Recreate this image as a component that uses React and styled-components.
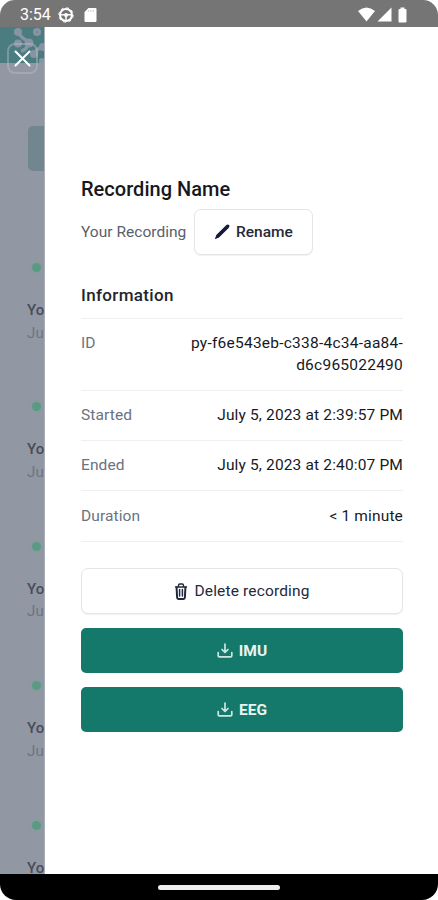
import styled, { createGlobalStyle } from 'styled-components';

const GlobalStyle = createGlobalStyle`
    * {
        box-sizing: border-box;
    }
    body {
        margin: 0;
        background-color: white;
        font-family: Roboto, "Liberation Sans", sans-serif;
    }
`;

const Screen = styled.div`
    width: 438px;
    height: 900px;
    display: flex;
    flex-direction: column;
    overflow: hidden;
`;

const StatusBar = styled.div`
    height: 27px;
    flex-shrink: 0;
    display: flex;
    align-items: center;
    justify-content: space-between;
    padding: 2px 28px 0px 20px;
    background-color: #757575;
    color: white;
    border-radius: 15px 15px 0px 0px;
`;

const StatusGroup = styled.div`
    display: flex;
    align-items: center;
    gap: ${props=>props.gap};
`;

const Clock = styled.span`
    width: 30px;
    font-size: 16px;
    font-weight: 400;
    white-space: nowrap;
`;

const Main = styled.div`
    flex: 1;
    min-height: 0;
    display: flex;
`;

const Backdrop = styled.div`
    width: 45px;
    position: relative;
    overflow: hidden;
    background-color: #9297a4;
    border-right: 1px solid #a9adb8;
`;

const Header = styled.div`
    height: 36px;
    background-color: #4b7c7f;
`;

const Logo = styled.svg`
    display: block;
`;

const CloseButton = styled.button`
    position: absolute;
    top: 16px;
    left: 7px;
    width: 31px;
    height: 31px;
    padding: 0;
    display: flex;
    align-items: center;
    justify-content: center;
    border: 2px solid rgba(190, 194, 208, 0.42);
    border-radius: 8px;
    background: transparent;
    cursor: pointer;
`;

const Action = styled.div`
    height: 45px;
    margin: 63px 0px 0px 28px;
    border-radius: 5px 0px 0px 5px;
    background-color: #71868f;
`;

const Cards = styled.div`
    padding: 92px 0px 0px 27px;
`;

const Card = styled.div`
    height: 139.4px;
`;

const Dot = styled.div`
    width: 9px;
    height: 9px;
    margin: 0px 0px 28px 5px;
    border-radius: 50%;
    background-color: #5a9a84;
    box-shadow: 0px 0px 0px 2px rgba(110, 165, 145, 0.28);
`;

const CardName = styled.div`
    font-size: 15px;
    line-height: 21.6px;
    font-weight: 500;
    color: #484d59;
`;

const CardDate = styled.div`
    font-size: 15px;
    line-height: 23px;
    letter-spacing: 0.3px;
    color: #6f7481;
`;

const Panel = styled.div`
    flex: 1;
    padding: 148px 35px 0px 36px;
    background-color: white;
`;

const Title = styled.h1`
    margin: 0;
    font-size: 20px;
    line-height: 28px;
    font-weight: 500;
    letter-spacing: 0.03px;
    color: #16181d;
`;

const NameRow = styled.div`
    display: flex;
    align-items: center;
    justify-content: space-between;
    width: 232px;
    margin-top: 6px;
`;

const Name = styled.span`
    font-size: 15.5px;
    letter-spacing: 0.03px;
    color: #5b606b;
    white-space: nowrap;
`;

const Button = styled.button`
    display: flex;
    align-items: center;
    justify-content: center;
    gap: 6px;
    width: ${props=>props.$width || "100%"};
    height: ${props=>props.$filled ? "45px" : "46px"};
    padding: 0;
    font-family: inherit;
    font-size: 15.5px;
    font-weight: ${props=>props.$weight || "500"};
    letter-spacing: ${props=>props.$spacing || "0px"};
    border: ${props=>props.$filled ? "none" : "1px solid #e4e5e9"};
    border-radius: ${props=>props.$filled ? "5px" : "7px"};
    background-color: ${props=>props.$filled ? "#14786a" : "white"};
    color: ${props=>props.$filled ? "#e9f4f2" : "#252a3a"};
    box-shadow: ${props=>props.$filled ? "none" : "0px 1px 1px rgba(0, 0, 0, 0.06)"};
    cursor: pointer;
`;

const Subtitle = styled.h2`
    margin: 28px 0px 11px;
    font-size: 17px;
    line-height: 24px;
    font-weight: 500;
    letter-spacing: 0.35px;
    color: #22252c;
`;

const Details = styled.div`
    border-top: 1px solid #eeeff1;
`;

const Detail = styled.div`
    display: flex;
    justify-content: space-between;
    padding: 13.1px 0px 13.8px;
    border-bottom: 1px solid #eeeff1;
    font-size: 15.5px;
    line-height: 22.2px;
`;

const Label = styled.span`
    color: #6b7280;
    letter-spacing: 0.1px;
`;

const Value = styled.span`
    width: 240px;
    text-align: right;
    color: #17191f;
    letter-spacing: ${props=>props.$spacing || "0.15px"};
`;

const Buttons = styled.div`
    display: flex;
    flex-direction: column;
    gap: 14px;
    margin-top: 26.6px;
`;

const NavBar = styled.div`
    height: 26px;
    flex-shrink: 0;
    display: flex;
    justify-content: center;
    align-items: center;
    background-color: black;
    border-radius: 0px 0px 16px 16px;
`;

const Handle = styled.div`
    width: 122px;
    height: 5px;
    border-radius: 3px;
    background-color: #eeeeee;
`;

const PencilIcon = () => (
    <svg width="16" height="16" viewBox="0 0 16 16" fill="#151a3a">
        <path d="M11.900 1.500Q13.800-.2 15 1t-.4 2.900L5 13.400.8 15.300l1.500-4.200z"/>
    </svg>
)

const TrashIcon = () => (
    <svg width="14" height="17" viewBox="0 0 14 17" fill="none" stroke="#22283d" strokeWidth="1.500" strokeLinecap="round" strokeLinejoin="round">
        <path d="M1.500 4h11M4.500 3.700V2.600Q4.500 1 5.800 1h2.400q1.300 0 1.300 1.600v1.100" strokeWidth="1.400"/>
        <path d="M2.600 4.500l.5 10q.1 1.400 1.400 1.400h5q1.300 0 1.400-1.400l.5-10" strokeWidth="2"/>
        <path d="M5.600 6.500v6.500M8.400 6.500v6.500"/>
    </svg>
)

const DownloadIcon = () => (
    <svg width="16" height="15" viewBox="0 0 16 15" fill="none" stroke="#cfe6e2" strokeWidth="1.700" strokeLinecap="round" strokeLinejoin="round">
        <path d="M8 1v8M5 6.500 8 9.500l3-3"/>
        <path d="M1.200 9.500v3.200q0 1.100 1.100 1.100h11.400q1.100 0 1.100-1.100V9.500"/>
    </svg>
)

const details = [
    { label: "Started", value: "July 5, 2023 at 2:39:57 PM" },
    { label: "Ended", value: "July 5, 2023 at 2:40:07 PM" },
    { label: "Duration", value: "< 1 minute" },
]

const App = () => {
  return (
    <Screen>
        <GlobalStyle/>
        <StatusBar>
            <StatusGroup gap="8px">
                <Clock>3:54</Clock>
                <StatusGroup gap="10px">
                    <svg width="16" height="16" viewBox="0 0 16 16" fill="none" stroke="white">
                        <circle cx="8" cy="8" r="6" strokeWidth="2"/>
                        <circle cx="8" cy="8" r="7.200" strokeWidth="1" strokeDasharray="2.800 2.855"/>
                        <path d="M2 7.700h12M8 8v6" strokeWidth="1.500"/>
                        <circle cx="8" cy="8" r="2" fill="white" stroke="none"/>
                    </svg>
                    <svg width="13" height="16" viewBox="0 0 13 16">
                        <path d="M4.500 1h7Q12.500 1 12.500 2v12q0 1-1 1h-10q-1 0-1-1V5z" fill="white"/>
                        <path d="M4.700 3v2M7 3v2M9.300 3v2" stroke="#ccc" strokeWidth="1"/>
                    </svg>
                </StatusGroup>
            </StatusGroup>
            <StatusGroup gap="2px">
                <svg width="17" height="15" viewBox="0 0 17 15"><path d="M0 4Q8.500-3 17 4L8.500 14.500z" fill="white"/></svg>
                <svg width="15" height="15" viewBox="0 0 15 15"><path d="M14.500.5v14H.5z" fill="white"/></svg>
                <svg width="16" height="16" viewBox="0 0 16 16"><path d="M6.500 2V.5h4V2h1q1 0 1 1v11.500q0 1-1 1H5.500q-1 0-1-1V3q0-1 1-1z" fill="white"/></svg>
            </StatusGroup>
        </StatusBar>
        <Main>
            <Backdrop>
                <Header>
                    <Logo width="45" height="36" viewBox="0 0 45 36" fill="#8894a2">
                        <circle cx="18" cy="5" r="4"/>
                        <circle cx="37" cy="5" r="4"/>
                        <circle cx="18" cy="16.500" r="4"/>
                        <circle cx="29" cy="16" r="4.500"/>
                        <circle cx="43" cy="20" r="4"/>
                        <circle cx="34" cy="27" r="4"/>
                        <circle cx="42" cy="34" r="3"/>
                        <circle cx="37" cy="5" r="1.200" fill="#7b8a97"/>
                        <path d="M18 5Q21 11 29 15Q27 23 21 24M34 27Q37 21 43 20" fill="none" stroke="#8894a2" strokeWidth="3.500"/>
                    </Logo>
                </Header>
                <CloseButton aria-label="Close">
                    <svg width="17" height="17" viewBox="0 0 17 17" stroke="white" strokeWidth="2" strokeLinecap="round"><path d="M1.500 1.500l14 14M15.500 1.500l-14 14"/></svg>
                </CloseButton>
                <Action/>
                <Cards>
                    {[0, 1, 2, 3, 4].map((i) => (
                        <Card key={i}>
                            <Dot/>
                            <CardName>Yo</CardName>
                            {i < 4 && <CardDate>Ju</CardDate>}
                        </Card>
                    ))}
                </Cards>
            </Backdrop>
            <Panel>
                <Title>Recording Name</Title>
                <NameRow>
                    <Name>Your Recording</Name>
                    <Button $width="119px"><PencilIcon/>Rename</Button>
                </NameRow>
                <Subtitle>Information</Subtitle>
                <Details>
                    <Detail>
                        <Label>ID</Label>
                        <Value $spacing="0.24px">py-f6e543eb-c338-4c34-aa84-<br/>d6c965022490</Value>
                    </Detail>
                    {details.map((item) => (
                        <Detail key={item.label}>
                            <Label>{item.label}</Label>
                            <Value>{item.value}</Value>
                        </Detail>
                    ))}
                </Details>
                <Buttons>
                    <Button $weight="400" $spacing="0.15px"><TrashIcon/>Delete recording</Button>
                    <Button $filled $weight="700"><DownloadIcon/>IMU</Button>
                    <Button $filled $weight="700"><DownloadIcon/>EEG</Button>
                </Buttons>
            </Panel>
        </Main>
        <NavBar>
            <Handle/>
        </NavBar>
    </Screen>
  )
}

export default App
